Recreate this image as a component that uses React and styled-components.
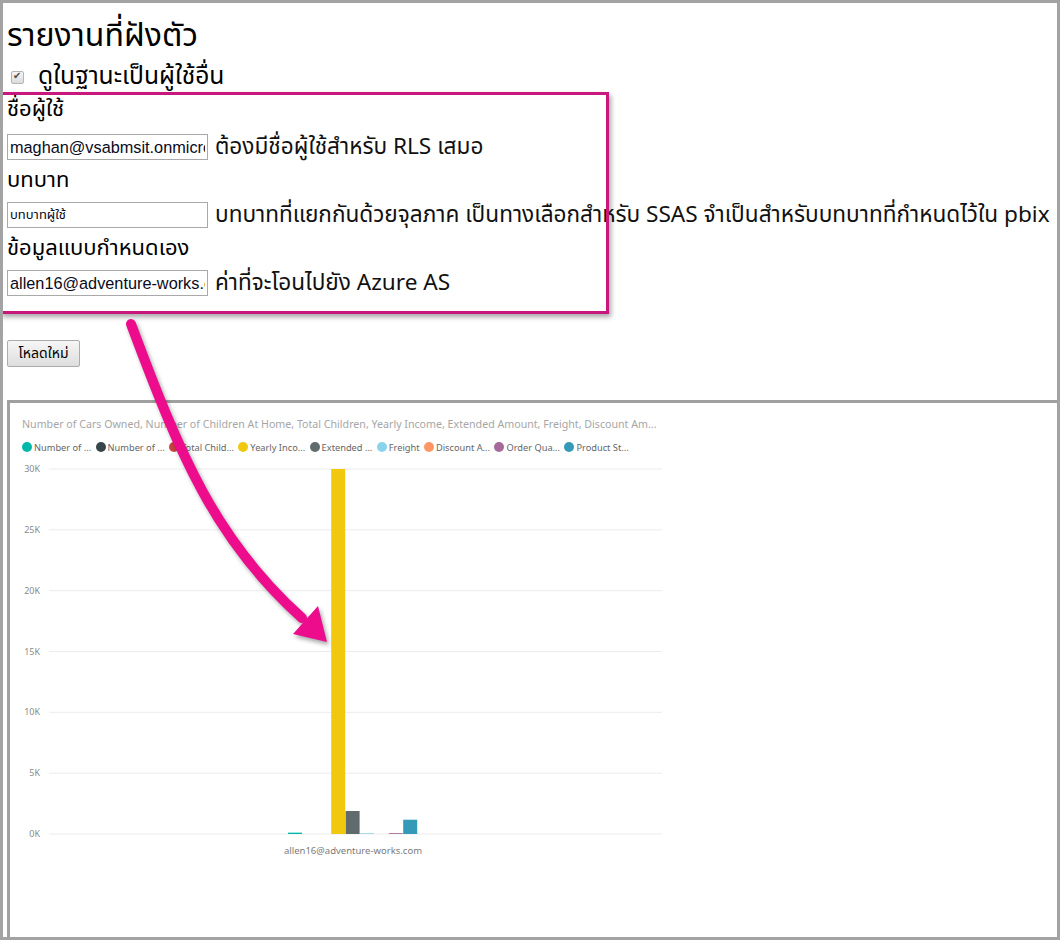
import React from "react"
import styled, { createGlobalStyle } from "styled-components"

const GlobalStyle = createGlobalStyle`
  html, body {
    margin: 0;
    padding: 0;
    background: #ffffff;
  }
`

const THAI = `"Noto Sans Thai", "Noto Sans Thai UI", "Leelawadee UI", "Noto Sans", "DejaVu Sans", sans-serif`
const CHART_FONT = `"Noto Sans", "Open Sans", sans-serif`

const series = [
  { name: "Number of ...", color: "#01B8AA", value: 110 },
  { name: "Number of ...", color: "#374649", value: 0 },
  { name: "Total Child...", color: "#C8463E", value: 0 },
  { name: "Yearly Inco...", color: "#F2C80F", value: 30000 },
  { name: "Extended ...", color: "#5F6B6D", value: 1890 },
  { name: "Freight", color: "#8AD4EB", value: 60 },
  { name: "Discount A...", color: "#FE9666", value: 0 },
  { name: "Order Qua...", color: "#A66999", value: 70 },
  { name: "Product St...", color: "#3599B8", value: 1175 },
]

const ticks = [30000, 25000, 20000, 15000, 10000, 5000, 0]

const App = () => (
  <>
    <GlobalStyle />
    <Frame>
      <Page>
        <Title>รายงานที่ฝังตัว</Title>
        <CheckRow>
          <Check type="checkbox" defaultChecked />
          <CheckLabel>ดูในฐานะเป็นผู้ใช้อื่น</CheckLabel>
        </CheckRow>

        <FieldLabel first>ชื่อผู้ใช้</FieldLabel>
        <InputRow>
          <TextInput defaultValue="maghan@vsabmsit.onmicrosoft.com" />
          <Hint>ต้องมีชื่อผู้ใช้สำหรับ RLS เสมอ</Hint>
        </InputRow>

        <FieldLabel>บทบาท</FieldLabel>
        <InputRow>
          <TextInput small defaultValue="บทบาทผู้ใช้" />
          <Hint>บทบาทที่แยกกันด้วยจุลภาค เป็นทางเลือกสำหรับ SSAS จำเป็นสำหรับบทบาทที่กำหนดไว้ใน pbix</Hint>
        </InputRow>

        <FieldLabel>ข้อมูลแบบกำหนดเอง</FieldLabel>
        <InputRow>
          <TextInput defaultValue="allen16@adventure-works.com" />
          <Hint>ค่าที่จะโอนไปยัง Azure AS</Hint>
        </InputRow>

        <ReloadButton>โหลดใหม่</ReloadButton>

        <Embed>
          <ChartTitle>
            Number of Cars Owned, Number of Children At Home, Total Children, Yearly Income, Extended Amount, Freight, Discount Am...
          </ChartTitle>
          <Legend>
            {series.map((s, i) => (
              <LegendItem key={i}>
                <Dot color={s.color} />
                {s.name}
              </LegendItem>
            ))}
          </Legend>
          <Plot width="660" height="420" viewBox="0 0 660 420">
            {ticks.map(t => {
              const y = 374 - (t / 30000) * 365
              return (
                <g key={t}>
                  <line x1="39" x2="652" y1={y} y2={y} stroke="#ececec" strokeWidth="1" />
                  <text x="30" y={y + 3} textAnchor="end" fontSize="9" fill="#8a8a8a">
                    {t / 1000}K
                  </text>
                </g>
              )
            })}
            {series.map((s, i) => {
              const h = (s.value / 30000) * 365
              return (
                <rect key={i} x={278 + i * 14.4} y={374 - h} width="14" height={h} fill={s.color} />
              )
            })}
            <text x="343" y="394" textAnchor="middle" fontSize="9.5" fill="#7a7a7a">
              allen16@adventure-works.com
            </text>
          </Plot>
        </Embed>
      </Page>

      <Highlight />
      <Arrow viewBox="0 0 1060 940" width="1060" height="940">
        <path
          d="M131 324 C 180 455, 215 540, 302 618"
          fill="none"
          stroke="#EC0C8C"
          strokeWidth="10"
          strokeLinecap="round"
        />
        <polygon points="293,634 318,606 327,642" fill="#EC0C8C" />
      </Arrow>
    </Frame>
  </>
)

const Frame = styled.div`
  position: relative;
  width: 1060px;
  height: 940px;
  box-sizing: border-box;
  border: 3px solid #a3a3a3;
  overflow: hidden;
  background: #ffffff;
`

const Page = styled.div`
  padding: 0 0 0 4px;
  font-family: ${THAI};
  color: #000000;
`

const Title = styled.h1`
  margin: 5px 0 0;
  height: 56px;
  line-height: 56px;
  font-size: 32px;
  font-weight: 400;
  white-space: nowrap;
`

const CheckRow = styled.div`
  display: flex;
  align-items: center;
  height: 26px;
`

const Check = styled.input`
  appearance: none;
  width: 13px;
  height: 13px;
  margin: 0 14px 0 4px;
  box-sizing: border-box;
  border: 1px solid #b4b4b4;
  border-radius: 2px;
  background: linear-gradient(#f4f4f4, #dcdcdc);
  position: relative;
  &::after {
    content: "✔";
    position: absolute;
    left: 1px;
    top: -2px;
    font-size: 10px;
    color: #4a4a4a;
    font-family: "DejaVu Sans", sans-serif;
  }
`

const CheckLabel = styled.span`
  font-size: 24.6px;
  line-height: 26px;
  white-space: nowrap;
`

const FieldLabel = styled.div`
  height: ${props => (props.first ? "39px" : "32px")};
  line-height: ${props => (props.first ? "39px" : "32px")};
  font-size: 22px;
  white-space: nowrap;
`

const InputRow = styled.div`
  display: flex;
  align-items: center;
  height: 36px;
`

const TextInput = styled.input`
  width: 201px;
  height: 26px;
  box-sizing: border-box;
  margin: 0;
  padding: 0 2px;
  border: 1px solid #a9a9a9;
  font-family: ${props => (props.small ? THAI : `"Liberation Sans", Arial, sans-serif`)};
  font-size: ${props => (props.small ? "13px" : "16.3px")};
  color: #0a0a20;
  background: #ffffff;
  flex-shrink: 0;
`

const Hint = styled.span`
  margin-left: 7px;
  font-size: 22.6px;
  white-space: nowrap;
  color: #111111;
`

const ReloadButton = styled.button`
  display: block;
  margin-top: 39px;
  width: 73px;
  height: 27px;
  padding: 0;
  font-family: ${THAI};
  font-size: 14px;
  color: #000000;
  border: 1px solid #acacac;
  border-radius: 2px;
  background: linear-gradient(#f6f6f6, #dedede);
`

const Embed = styled.div`
  margin-top: 33px;
  width: 1060px;
  height: 560px;
  box-sizing: border-box;
  border: 3px solid #a0a0a0;
  font-family: ${CHART_FONT};
`

const ChartTitle = styled.div`
  margin: 13px 0 0 12px;
  height: 16px;
  line-height: 16px;
  font-size: 10.65px;
  color: #a6a6a6;
  white-space: nowrap;
`

const Legend = styled.div`
  display: flex;
  gap: 4.4px;
  margin: 8px 0 0 12px;
  height: 14px;
  align-items: center;
`

const LegendItem = styled.span`
  display: flex;
  align-items: center;
  gap: 2px;
  font-size: 9.25px;
  color: #666666;
  white-space: nowrap;
`

const Dot = styled.span`
  width: 10px;
  height: 10px;
  border-radius: 50%;
  background: ${props => props.color};
`

const Plot = styled.svg`
  display: block;
  margin-top: 6px;
  font-family: ${CHART_FONT};
`

const Highlight = styled.div`
  position: absolute;
  left: -3px;
  top: 89px;
  width: 609px;
  height: 222px;
  box-sizing: border-box;
  border: 3px solid #c8187e;
  box-shadow: 2px 3px 5px rgba(0, 0, 0, 0.35);
  pointer-events: none;
`

const Arrow = styled.svg`
  position: absolute;
  left: -3px;
  top: -3px;
  pointer-events: none;
  filter: drop-shadow(2px 3px 2px rgba(0, 0, 0, 0.35));
`

export default App
